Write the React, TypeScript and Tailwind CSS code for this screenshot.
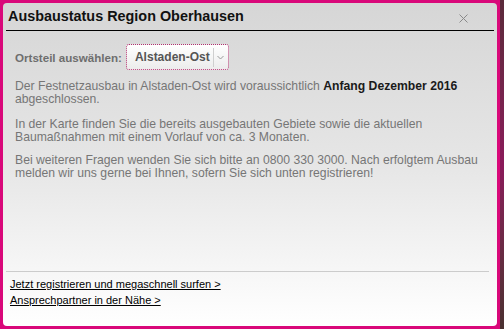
export default function App() {
  return (
    <div className="w-[504px] h-[329px] bg-[#d9087a] flex font-['Liberation_Sans',Arial,sans-serif] overflow-hidden">
      <div className="flex-1 pt-[3px] pb-[3px] pl-[3px]">
        <div className="h-full rounded-[4px] bg-gradient-to-b from-[#d6d6d6] via-[#e6e6e6] to-white flex flex-col">
          {/* Kopf */}
          <div className="relative mx-[3px] pt-[4px] pb-[5px] px-[2px] border-b border-black">
            <h1 className="text-[14.4px] font-bold text-[#111] leading-[18px]">Ausbaustatus Region Oberhausen</h1>
            <svg className="absolute right-[26px] top-[11px]" width="9" height="9" viewBox="0 0 9 9">
              <path d="M0.5 0.5 L8.5 8.5 M8.5 0.5 L0.5 8.5" stroke="#8a8a8a" strokeWidth="1" fill="none" />
            </svg>
          </div>

          {/* Inhalt */}
          <div className="px-[12px] pt-[13px] flex-1 text-[12.2px] leading-[13px] text-[#767676]">
            <div className="flex items-center gap-[4px]">
              <span className="text-[11.6px] font-bold text-[#6e6e6e]">Ortsteil auswählen:</span>
              <div className="flex items-center h-[26px] rounded-[3px] border border-dotted border-[#b0306e] bg-gradient-to-b from-white to-[#ececec]">
                <span className="pl-[8px] pr-[3px] text-[12px] font-bold text-[#555]">Alstaden-Ost</span>
                <span className="h-[19px] border-l border-[#cfcfcf] w-[15px] flex items-center justify-center">
                  <svg width="7" height="5" viewBox="0 0 7 5">
                    <path d="M0.5 1 L3.5 4 L6.5 1" stroke="#999" strokeWidth="1" fill="none" />
                  </svg>
                </span>
              </div>
            </div>

            <p className="mt-[10px]">
              Der Festnetzausbau in Alstaden-Ost wird voraussichtlich{" "}
              <b className="text-[#1a1a1a]">Anfang Dezember 2016</b> abgeschlossen.
            </p>
            <p className="mt-[12px]">
              In der Karte finden Sie die bereits ausgebauten Gebiete sowie die aktuellen
              Baumaßnahmen mit einem Vorlauf von ca. 3 Monaten.
            </p>
            <p className="mt-[10px]">
              Bei weiteren Fragen wenden Sie sich bitte an 0800 330 3000. Nach erfolgtem Ausbau
              melden wir uns gerne bei Ihnen, sofern Sie sich unten registrieren!
            </p>
          </div>

          {/* Fuß */}
          <div className="mx-[3px] mr-[8px] border-t border-[#cccccc] pt-[6px] pb-[19px] px-[4px] flex flex-col gap-[3px] text-[11px] leading-[13px] text-black">
            <a className="underline">Jetzt registrieren und megaschnell surfen &gt;</a>
            <a className="underline">Ansprechpartner in der Nähe &gt;</a>
          </div>
        </div>
      </div>
      <div className="w-[7px] flex">
        <div className="w-[3px] bg-[#d9087a]" />
        <div className="flex-1 bg-gradient-to-b from-[#5a2a3a] via-[#8a1a5a] to-[#4a3030]" />
      </div>
    </div>
  );
}
